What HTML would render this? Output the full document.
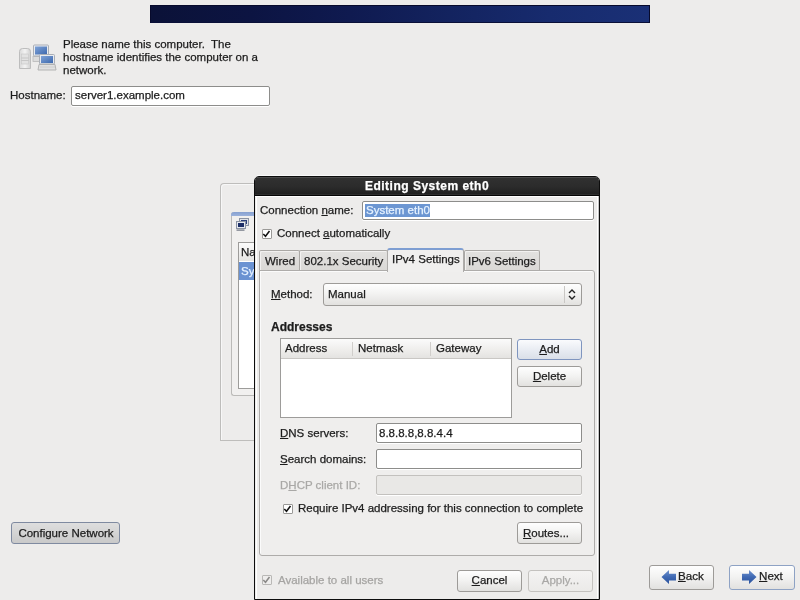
<!DOCTYPE html>
<html><head><meta charset="utf-8">
<style>
*{margin:0;padding:0;box-sizing:border-box}
html,body{width:800px;height:600px;overflow:hidden;background:#edeceb}
body{position:relative;-webkit-font-smoothing:antialiased;font-family:"Liberation Sans",sans-serif;font-size:11.5px;color:#1c1c1c}
.a{position:absolute}
.t{position:absolute;white-space:pre;line-height:13px;will-change:transform;-webkit-text-stroke:0.25px currentColor}
.u{text-decoration:underline;text-underline-offset:1px}
.entry{position:absolute;background:#fff;border:1px solid #8d8d8b;border-radius:2px;box-shadow:0 1px 0 #fff}
.btn{position:absolute;will-change:transform;-webkit-text-stroke:0.25px currentColor;border:1px solid #9d9b98;border-radius:3px;background:linear-gradient(#fefefe,#f3f3f2 45%,#e2e1df);text-align:center;line-height:19px}
.chk{position:absolute;width:10px;height:10px;border:1px solid #9a9997;background:#fff;border-radius:1px}
.chk svg{position:absolute;left:-1px;top:-1px}
</style></head><body>

<!-- top banner -->
<div class="a" style="left:150px;top:5px;width:500px;height:18px;background:linear-gradient(90deg,#0b1238 0%,#0c1442 20%,#0f1a50 40%,#13235f 60%,#172b6e 80%,#1a3076 100%);border:1px solid #070a2c;border-bottom-color:#0a1038"></div>

<!-- icon -->
<svg class="a" style="left:17px;top:42px" width="40" height="32" viewBox="0 0 40 32">
 <defs>
  <linearGradient id="scr" x1="0" y1="0" x2="1" y2="1"><stop offset="0" stop-color="#7fa3d8"/><stop offset="1" stop-color="#3d68ad"/></linearGradient>
  <linearGradient id="srv" x1="0" y1="0" x2="1" y2="0"><stop offset="0" stop-color="#d9d9d9"/><stop offset="0.5" stop-color="#f3f3f3"/><stop offset="1" stop-color="#d0d0d0"/></linearGradient>
 </defs>
 <path d="M2.5 9.5q0-3 3-3h5q3 0 3 3v17h-11z" fill="url(#srv)" stroke="#bdbdbd"/>
 <rect x="4.5" y="12" width="7" height="10" fill="#e2e2e2" stroke="#c6c6c6" stroke-width="0.6"/>
 <path d="M4.5 16h7M4.5 18.5h7" stroke="#b5b5b5" stroke-width="0.6"/>
 <rect x="16" y="14.5" width="8" height="5" fill="#dcdcdc" stroke="#b8b8b8" stroke-width="0.8"/>
 <rect x="16.5" y="3" width="15" height="11" rx="1" fill="#e8ebf0" stroke="#a9aeb6"/>
 <rect x="18" y="4.5" width="12" height="8" fill="url(#scr)"/>
 <rect x="22.5" y="12.5" width="15" height="9.5" rx="1" fill="#e8ebf0" stroke="#a9aeb6"/>
 <rect x="24" y="14" width="12" height="7" fill="url(#scr)"/>
 <path d="M22 22.5h16l1 5.5H21z" fill="#e1e1e1" stroke="#b3b3b3"/>
 <path d="M23 25h15" stroke="#c8c8c8" stroke-width="0.8"/>
</svg>

<div class="t" style="left:63px;top:38px;line-height:13px">Please name this computer.  The
hostname identifies the computer on a
network.</div>

<div class="t" style="left:10px;top:89px">Hostname:</div>
<div class="entry" style="left:71px;top:86px;width:199px;height:20px"></div>
<div class="t" style="left:75px;top:89px">server1.example.com</div>

<!-- configure network -->
<div class="btn" style="left:11px;top:522px;width:109px;height:22px;background:linear-gradient(#dedede,#d2d2d2 60%,#c9c9c9);border-color:#7f8aa0;line-height:21px;text-indent:1px">Configure Network</div>

<!-- back / next -->
<div class="btn" style="left:649px;top:565px;width:65px;height:25px"></div>
<svg class="a" style="left:661px;top:569px" width="16" height="16" viewBox="0 0 16 16"><defs><linearGradient id="ga" x1="0" y1="0" x2="0" y2="1"><stop offset="0" stop-color="#6f93cf"/><stop offset="0.5" stop-color="#3f69b3"/><stop offset="1" stop-color="#2a529c"/></linearGradient></defs><path d="M0.5 8L8 1v3.8h7v6.6H8V15z" fill="url(#ga)"/></svg>
<div class="t" style="left:678px;top:569px;font-size:11.6px"><span class="u">B</span>ack</div>
<div class="btn" style="left:729px;top:565px;width:66px;height:25px;border-color:#8ea2c4"></div>
<svg class="a" style="left:741px;top:569px" width="16" height="16" viewBox="0 0 16 16"><path d="M15.5 8L8 1v3.8H1v6.6h7V15z" fill="url(#ga)"/></svg>
<div class="t" style="left:759px;top:569px;font-size:11.6px"><span class="u">N</span>ext</div>

<!-- background window -->
<div class="a" style="left:220px;top:183px;width:60px;height:258px;border:1px solid #bebdbb;border-radius:4px 0 0 0;border-right:none;box-shadow:inset 1px 1px #f7f7f7"></div>
<div class="a" style="left:231px;top:212px;width:40px;height:184px;border:1px solid #bbbab8;border-top:none;border-radius:3px 0 0 3px;border-right:none;background:#f1f0ef"></div>
<div class="a" style="left:231px;top:212px;width:40px;height:4px;border-radius:3px 0 0 0;background:linear-gradient(#86a0d0,#9cb2dc)"></div>
<svg class="a" style="left:235px;top:218px" width="15" height="15" viewBox="0 0 15 15">
 <rect x="4.5" y="0.5" width="9" height="7" fill="#dfe2e8" stroke="#8b93a3"/><rect x="6" y="2" width="6" height="4" fill="#2b3f7a"/>
 <rect x="1.5" y="3.5" width="9" height="7" fill="#e6e9ef" stroke="#8b93a3"/><rect x="3" y="5" width="6" height="4" fill="#1c2e66"/>
 <rect x="1.5" y="11.5" width="8" height="1.2" fill="#6d7380"/>
</svg>
<div class="a" style="left:238px;top:242px;width:30px;height:147px;border:1px solid #9d9c9a;background:#fff"></div>
<div class="a" style="left:239px;top:243px;width:30px;height:18px;background:linear-gradient(#fbfbfb,#e6e5e3)"></div>
<div class="t" style="left:241px;top:246px">Na</div>
<div class="a" style="left:239px;top:262px;width:30px;height:18px;background:#6a92d2"></div>
<div class="t" style="left:241px;top:265px;color:#e4f0ff">Sy</div>

<!-- dialog -->
<div class="a" style="left:257px;top:175px;width:340px;height:1px;background:#fafafa"></div>
<div class="a" style="left:254px;top:176px;width:346px;height:424px;background:#edeceb;border:1px solid #0c0c0c;border-radius:5px 5px 0 0;overflow:hidden">
 <div class="a" style="left:0;top:0;width:344px;height:19px;background:linear-gradient(#313131,#2c2c2c 50%,#1f1f1f);border-bottom:1px solid #050505;box-shadow:inset 0 1px #4a4a4a,inset 0 -1px #2e2e2e"></div>
 <div class="t" style="left:0;top:3px;width:344px;text-align:center;color:#fff;font-weight:bold;font-size:12px;letter-spacing:0.5px">Editing System eth0</div>
 <div class="a" style="left:0;top:19px;width:344px;height:1px;background:#fff"></div>
 <div class="a" style="left:1px;top:19px;width:1px;height:410px;background:#fff"></div>
 <div class="a" style="left:342px;top:19px;width:1px;height:410px;background:#fff"></div>
 <div class="a" style="left:343px;top:19px;width:1px;height:410px;background:#c4c4c4"></div>
</div>

<!-- dialog contents -->
<div class="t" style="left:260px;top:204px">Connection <span class="u">n</span>ame:</div>
<div class="entry" style="left:362px;top:201px;width:232px;height:19px"></div>
<div class="a" style="left:365px;top:204px;width:65px;height:13px;background:#6c96d2"></div>
<div class="t" style="left:366px;top:204px;color:#e6f2ff">System eth0</div>

<div class="chk" style="left:262px;top:229px"><svg width="10" height="10" viewBox="0 0 10 10"><path d="M1.3 5L3.5 7.3L7.5 2" fill="none" stroke="#111" stroke-width="1.5"/></svg></div>
<div class="t" style="left:277px;top:227px">Connect <span class="u">a</span>utomatically</div>

<!-- tabs -->
<div class="a" style="left:259px;top:250px;width:41px;height:21px;border:1px solid #aaa8a5;border-bottom:none;border-radius:2px 2px 0 0;background:linear-gradient(#e2e1df,#dad8d5);box-shadow:inset 1px 1px #f2f1f0"></div>
<div class="t" style="left:265px;top:255px">Wired</div>
<div class="a" style="left:299px;top:250px;width:89px;height:21px;border:1px solid #aaa8a5;border-bottom:none;border-radius:2px 2px 0 0;background:linear-gradient(#e2e1df,#dad8d5);box-shadow:inset 1px 1px #f2f1f0"></div>
<div class="t" style="left:304px;top:255px">802.1x Security</div>
<div class="a" style="left:464px;top:250px;width:76px;height:21px;border:1px solid #aaa8a5;border-bottom:none;border-radius:2px 2px 0 0;background:linear-gradient(#e2e1df,#dad8d5);box-shadow:inset 1px 1px #f2f1f0"></div>
<div class="t" style="left:468px;top:255px">IPv6 Settings</div>

<!-- panel -->
<div class="a" style="left:259px;top:270px;width:336px;height:286px;border:1px solid #aeacaa;border-radius:0 3px 3px 3px;background:#efeeed;box-shadow:inset 1px 1px #fbfbfb"></div>
<!-- active tab -->
<div class="a" style="left:387px;top:248px;width:77px;height:24px;border:1px solid #aeacaa;border-bottom:none;border-radius:3px 3px 0 0;background:#f0efee;border-top:2px solid #7e9ed2"></div>
<div class="t" style="left:392px;top:253px">IPv4 Settings</div>

<div class="t" style="left:271px;top:288px"><span class="u">M</span>ethod:</div>
<div class="btn" style="left:323px;top:283px;width:259px;height:23px;text-align:left;padding-left:4px;line-height:20px">Manual</div>
<div class="a" style="left:564px;top:286px;width:1px;height:17px;background:#c9c7c4"></div>
<svg class="a" style="left:567px;top:288px" width="10" height="13" viewBox="0 0 10 13"><path d="M2 5l3-3 3 3M2 8l3 3 3-3" fill="none" stroke="#222" stroke-width="1.4"/></svg>

<div class="t" style="left:271px;top:321px;font-weight:bold;font-size:12px">Addresses</div>

<div class="a" style="left:280px;top:338px;width:232px;height:80px;border:1px solid #9d9c9a;background:#fff"></div>
<div class="a" style="left:281px;top:339px;width:230px;height:20px;background:linear-gradient(#fbfbfb,#eeedeb 60%,#e4e3e1);border-bottom:1px solid #c9c7c4"></div>
<div class="a" style="left:352px;top:342px;width:1px;height:14px;background:#d0cecb"></div>
<div class="a" style="left:430px;top:342px;width:1px;height:14px;background:#d0cecb"></div>
<div class="t" style="left:285px;top:342px">Address</div>
<div class="t" style="left:358px;top:342px">Netmask</div>
<div class="t" style="left:436px;top:342px">Gateway</div>

<div class="btn" style="left:517px;top:339px;width:65px;height:21px;border-color:#7f95bf;background:linear-gradient(#fafbfd,#e6eaf1 60%,#dadfe8)"><span class="u">A</span>dd</div>
<div class="btn" style="left:517px;top:366px;width:65px;height:21px"><span class="u">D</span>elete</div>

<div class="t" style="left:280px;top:427px"><span class="u">D</span>NS servers:</div>
<div class="entry" style="left:376px;top:423px;width:206px;height:20px"></div>
<div class="t" style="left:379px;top:427px">8.8.8.8,8.8.4.4</div>
<div class="t" style="left:280px;top:453px"><span class="u">S</span>earch domains:</div>
<div class="entry" style="left:376px;top:449px;width:206px;height:20px"></div>
<div class="t" style="left:280px;top:479px;color:#a9a8a6">D<span class="u">H</span>CP client ID:</div>
<div class="entry" style="left:376px;top:475px;width:206px;height:20px;background:#e9e8e6;border-color:#c3c1be"></div>

<div class="chk" style="left:283px;top:504px"><svg width="10" height="10" viewBox="0 0 10 10"><path d="M1.3 5L3.5 7.3L7.5 2" fill="none" stroke="#111" stroke-width="1.5"/></svg></div>
<div class="t" style="left:298px;top:502px">Require IPv4 addressing for this connection to complete</div>

<div class="btn" style="left:517px;top:522px;width:65px;height:22px;text-align:left;padding-left:5px;line-height:20px"><span class="u">R</span>outes...</div>

<div class="chk" style="left:262px;top:575px;border-color:#b9b8b6;background:#eeedec"><svg width="10" height="10" viewBox="0 0 10 10"><path d="M1.3 5L3.5 7.3L7.5 2" fill="none" stroke="#8a8987" stroke-width="1.5"/></svg></div>
<div class="t" style="left:278px;top:574px;color:#a5a4a2">Available to all users</div>

<div class="btn" style="left:457px;top:570px;width:65px;height:22px"><span class="u">C</span>ancel</div>
<div class="btn" style="left:528px;top:570px;width:65px;height:22px;border-color:#c4c2bf;color:#a9a8a6;background:linear-gradient(#f4f3f2,#ebeae8)">Apply...</div>
</body></html>
